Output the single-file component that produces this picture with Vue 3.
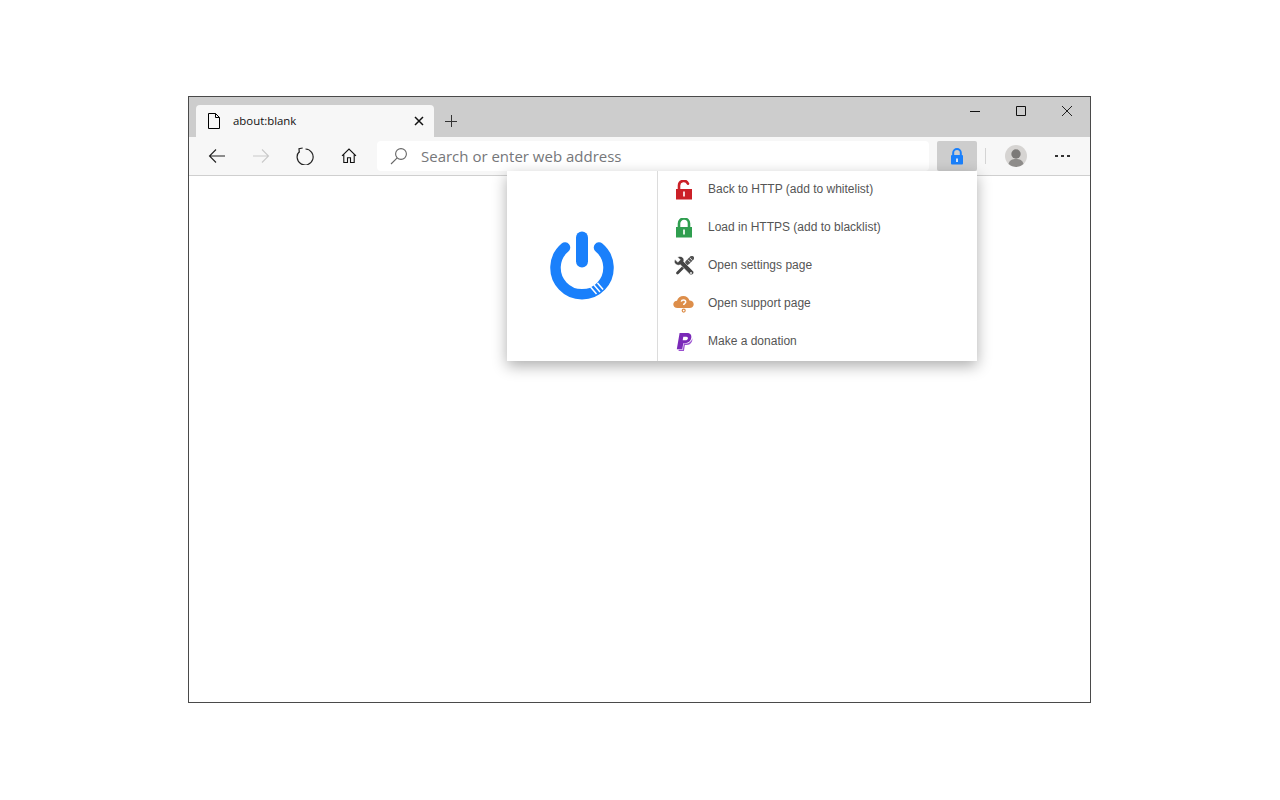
<script setup>
const items = [
  { label: 'Back to HTTP (add to whitelist)', icon: 'open' },
  { label: 'Load in HTTPS (add to blacklist)', icon: 'closed' },
  { label: 'Open settings page', icon: 'tools' },
  { label: 'Open support page', icon: 'cloud' },
  { label: 'Make a donation', icon: 'paypal' },
]
</script>

<template>
  <div class="page">
    <div class="window">
      <div class="titlebar">
        <div class="tab">
          <svg class="tab-doc" width="14" height="16" viewBox="0 0 14 16" fill="none" stroke="#000" stroke-width="1">
            <path d="M1.5.5h7l4 4v11h-11zM8.5.5v4h4" />
          </svg>
          <span class="tab-title">about:blank</span>
          <svg class="tab-close" width="10" height="10" viewBox="0 0 10 10" stroke="#111" stroke-width="1.5">
            <path d="M1 1l8 8M9 1l-8 8" />
          </svg>
        </div>
        <svg class="newtab" width="12" height="12" viewBox="0 0 12 12" stroke="#333" stroke-width="1">
          <path d="M6.500 0v12M0 6.500h12" />
        </svg>
        <div class="win-controls">
          <span class="win-btn"><svg width="12" height="12" viewBox="0 0 12 12" stroke="#111"><path d="M1 6.500h10" /></svg></span>
          <span class="win-btn"><svg width="12" height="12" viewBox="0 0 12 12" fill="none" stroke="#111"><path d="M1.500 1.500h9v9h-9z" /></svg></span>
          <span class="win-btn"><svg width="12" height="12" viewBox="0 0 12 12" stroke="#222"><path d="M1 1l10 10M11 1L1 11" /></svg></span>
        </div>
      </div>

      <div class="toolbar">
        <span class="nav-btn">
          <svg width="18" height="16" viewBox="0 0 18 16" fill="none" stroke="#222" stroke-width="1.100"><path d="M17 8H1.500M8 1.500L1.500 8 8 14.500" /></svg>
        </span>
        <span class="nav-btn">
          <svg width="18" height="16" viewBox="0 0 18 16" fill="none" stroke="#c9c9c9" stroke-width="1.100"><path d="M1 8h15.500M10 1.500L16.500 8 10 14.500" /></svg>
        </span>
        <span class="nav-btn">
          <svg width="18" height="18" viewBox="0 0 18 18" fill="none" stroke="#222" stroke-width="1.200"><path d="M9.500 2A8 8 0 1 1 3.600 4.200M6.700 1L3 1.700l.3 4" /></svg>
        </span>
        <span class="nav-btn">
          <svg width="16" height="16" viewBox="0 0 16 16" fill="none" stroke="#111" stroke-width="1.100"><path d="M1 7.800L8 1l7 6.800M2.800 6.300v8.200h3.700V9.800h3v4.700h3.700V6.300" /></svg>
        </span>
        <div class="address">
          <svg class="search-icon" width="18" height="18" viewBox="0 0 18 18" fill="none" stroke="#666" stroke-width="1.100"><circle cx="11" cy="7" r="5.400" /><path d="M7.200 10.800L1 17" /></svg>
          <span class="placeholder">Search or enter web address</span>
        </div>
        <span class="ext-btn">
          <svg width="14" height="17" viewBox="0 0 14 17">
            <path d="M3.200 8V4.800a3.800 3.800 0 0 1 7.600 0V8" fill="none" stroke="#1a80fb" stroke-width="2" />
            <rect x="1" y="7" width="12" height="9.500" rx="1" fill="#1a80fb" />
            <rect x="6" y="10.500" width="2" height="3.500" fill="#cfe3fb" />
          </svg>
        </span>
        <span class="sep"></span>
        <span class="avatar">
          <svg width="22" height="22" viewBox="0 0 22 22">
            <circle cx="11" cy="11" r="11" fill="#d6d4d2" />
            <circle cx="11" cy="9" r="4.700" fill="#7c7a78" />
            <path d="M3.500 19c1-3.800 3.800-5 7.500-5s6.500 1.200 7.500 5a11 11 0 0 1-15 0z" fill="#8e8c8a" />
          </svg>
        </span>
        <span class="more"><i></i><i></i><i></i></span>
      </div>

      <div class="content">
        <div class="popup">
          <div class="popup-left">
            <svg width="66" height="72" viewBox="0 0 66 72">
              <path d="M16 17.500A26.500 26.500 0 1 0 50 17.500" fill="none" stroke="#1a80fb" stroke-width="10.500" stroke-linecap="round" />
              <rect x="27" y="1.500" width="12" height="36" rx="6" fill="#1a80fb" />
              <path d="M41.500 57.100l6 6.800M45 55.100l6 6.800M48.500 53.100l5.600 6.400" stroke="#fff" stroke-width="1.500" fill="none" />
            </svg>
          </div>
          <ul class="menu">
            <li v-for="item in items" :key="item.label" class="menu-item">
              <span class="menu-icon">
                <svg v-if="item.icon === 'open'" width="18" height="20" viewBox="0 0 18 20">
                  <path d="M4 9V5.500a4.700 4.700 0 0 1 9-1.800" fill="none" stroke="#cb2027" stroke-width="2.600" stroke-linecap="round" />
                  <rect x="1" y="9" width="16" height="10.500" fill="#cb2027" />
                  <rect x="8" y="11.500" width="2" height="5" fill="#f6d7d8" />
                </svg>
                <svg v-else-if="item.icon === 'closed'" width="18" height="20" viewBox="0 0 18 20">
                  <path d="M4 9V5.500a5 5 0 0 1 10 0V9" fill="none" stroke="#2f9e4f" stroke-width="2.600" />
                  <rect x="1" y="9" width="16" height="10.500" fill="#2f9e4f" />
                  <rect x="8" y="11.500" width="2" height="5" fill="#dcf1e2" />
                </svg>
                <svg v-else-if="item.icon === 'tools'" class="tools-icon" width="20" height="20" viewBox="0 0 20 20">
                  <path d="M13 7.500L3.500 17" stroke="#444" stroke-width="2.800" stroke-linecap="round" fill="none" />
                  <path d="M13.600 6.400L17.800 2.200" stroke="#555" stroke-width="4.600" stroke-linecap="round" fill="none" />
                  <path d="M13.800 3.600l2.800 2.800M15.700 1.800l2.800 2.800" stroke="#fff" stroke-width="0.800" fill="none" />
                  <path d="M1 3.500L3.800 6.300 6.300 3.800 3.500 1C6-.3 8.900.5 9.700 2.900c.3 1 .2 1.900-.1 2.700l9.400 9.400c1 1 .9 2.200-.1 3.100-1 1-2.200 1-3.100.1L6.400 8.800C4 9.700 1.600 8.900.6 6.800.2 5.800.4 4.400 1 3.500z" fill="#444" stroke="#fff" stroke-width="0.500" />
                  <circle cx="17" cy="17" r="0.900" fill="#fff" />
                </svg>
                <svg v-else-if="item.icon === 'cloud'" width="21" height="18" viewBox="0 0 21 18">
                  <path d="M4.500 13C2 13 .3 11.400.3 9.300S2 5.700 4 5.700C4.800 3 7.300 1 10.300 1c3 0 5.400 1.900 6.200 4.600 2.400 0 4.200 1.600 4.200 3.700S19 13 16.500 13z" fill="#dd8e4a" />
                  <path d="M8.300 6.700c.2-1.100 1.100-1.700 2.200-1.700 1.200 0 2.200.7 2.200 1.900 0 1.500-2 1.600-2 3.100" fill="none" stroke="#fff" stroke-width="1.500" />
                  <path d="M10.700 11.300v1.700" stroke="#dd8e4a" stroke-width="1.600" />
                  <circle cx="10.700" cy="15.600" r="1.500" fill="none" stroke="#dd8e4a" stroke-width="1.200" />
                </svg>
                <svg v-else width="18" height="20" viewBox="0 0 18 20">
                  <path d="M4.600 1h7.200c3.400 0 5 2 4.500 4.800-.6 3.400-3 5.400-6.500 5.400H8.300l-1 6H1.800z" fill="#7a29b8" />
                  <path d="M8.300 4.800h2.900c1.300 0 1.900.7 1.700 1.700-.2 1.200-1.200 1.800-2.500 1.800H7.700z" fill="#fff" />
                  <path d="M17.200 6.200c.8 3.400-1.700 6.700-5.500 6.700H9.900l-1 6.100H3.500l.3-1.300h4l1-6.200h1.900c3.400 0 5.900-2.100 6.500-5.300z" fill="#9a4fd0" />
                </svg>
              </span>
              <span class="menu-label">{{ item.label }}</span>
            </li>
          </ul>
        </div>
      </div>
    </div>
  </div>
</template>

<style>
html, body { margin: 0; background: #fff; }
</style>

<style scoped>
.page {
  width: 1280px;
  height: 800px;
  padding: 96px 0 0 188px;
  box-sizing: border-box;
  overflow: hidden;
  background: #fff;
}
.window {
  width: 903px;
  height: 607px;
  box-sizing: border-box;
  border: 1px solid #4a4a4a;
  display: flex;
  flex-direction: column;
}
.titlebar {
  height: 40px;
  flex: none;
  background: #cdcdcd;
  box-sizing: border-box;
  padding: 8px 0 0 7px;
  display: flex;
  align-items: flex-start;
}
.tab {
  width: 238px;
  height: 32px;
  background: #f7f7f7;
  border-radius: 4px 4px 0 0;
  display: flex;
  align-items: center;
  box-sizing: border-box;
  padding: 0 10px 0 11px;
}
.tab-doc { flex: none; }
.tab-title {
  margin-left: 12px;
  margin-bottom: 2px;
  font: 11.400px "Open Sans", "Noto Sans", sans-serif;
  color: #111;
  flex: 1;
}
.tab-close { flex: none; }
.newtab { margin: 10px 0 0 11px; flex: none; }
.win-controls {
  margin-left: auto;
  display: flex;
  margin-top: -8px;
}
.win-btn {
  width: 46px;
  height: 27px;
  display: flex;
  align-items: center;
  justify-content: center;
}
.toolbar {
  height: 39px;
  flex: none;
  background: #f7f7f7;
  border-bottom: 1px solid #cfcfcf;
  box-sizing: border-box;
  display: flex;
  align-items: center;
  padding: 0 0 0 6px;
}
.nav-btn {
  width: 44px;
  height: 30px;
  display: flex;
  align-items: center;
  justify-content: center;
  flex: none;
}
.address {
  width: 552px;
  height: 30px;
  margin-left: 6px;
  background: #fff;
  border-radius: 4px;
  display: flex;
  align-items: center;
  box-sizing: border-box;
  padding-left: 13px;
  flex: none;
}
.search-icon { flex: none; }
.placeholder {
  margin-left: 13px;
  font: 15px "Open Sans", "Noto Sans", sans-serif;
  color: #76777a;
}
.ext-btn {
  width: 40px;
  height: 30px;
  margin-left: 8px;
  background: #cdcdcd;
  border-radius: 2px;
  display: flex;
  align-items: center;
  justify-content: center;
  flex: none;
}
.sep {
  width: 1px;
  height: 16px;
  margin-left: 8px;
  background: #d4d4d4;
  flex: none;
}
.avatar {
  width: 22px;
  height: 22px;
  margin-left: 19px;
  flex: none;
  display: flex;
}
.more {
  margin-left: 28px;
  display: flex;
  gap: 3px;
  flex: none;
}
.more i {
  width: 3px;
  height: 2px;
  background: #333;
  display: block;
}
.content {
  flex: 1;
  background: #fff;
  position: relative;
}
.popup {
  position: absolute;
  left: 318px;
  top: -5px;
  width: 470px;
  height: 190px;
  background: #fff;
  box-shadow: 0 5px 14px rgba(0, 0, 0, 0.32);
  display: flex;
}
.popup-left {
  width: 150px;
  flex: none;
  border-right: 1px solid #dcdcdc;
  display: flex;
  align-items: center;
  justify-content: center;
  box-sizing: content-box;
}
.menu {
  list-style: none;
  margin: 0;
  padding: 0;
  flex: 1;
}
.menu-item {
  height: 38px;
  display: flex;
  align-items: center;
  box-sizing: border-box;
  padding-left: 15px;
}
.menu-icon {
  width: 21px;
  display: flex;
  justify-content: center;
  flex: none;
}
.tools-icon { margin-top: -1px; }
.menu-label {
  margin-left: 14px;
  margin-bottom: 2px;
  font: 12px "Liberation Sans", Arial, sans-serif;
  color: #555;
}
</style>
